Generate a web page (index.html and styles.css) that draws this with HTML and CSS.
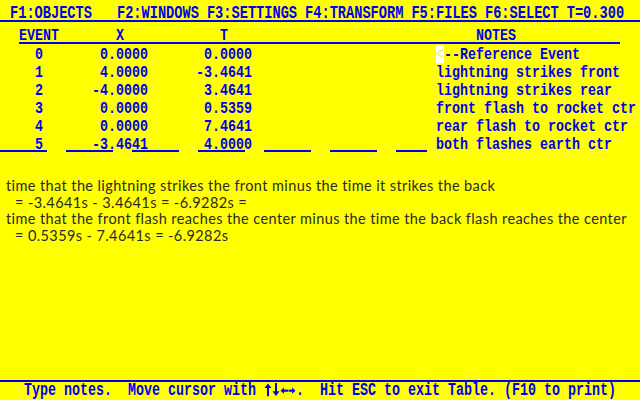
FILE: index.html
```html
<!DOCTYPE html>
<html>
<head>
<meta charset="utf-8">
<link rel="stylesheet" href="styles.css">
</head>
<body>
<div class="screen">
  <div class="menu">
    <span class="m1">F1:OBJECTS</span>
    <span class="m2">F2:WINDOWS</span>
    <span>F3:SETTINGS</span>
    <span>F4:TRANSFORM</span>
    <span>F5:FILES</span>
    <span>F6:SELECT</span>
    <span>T=0.300</span>
  </div>
  <div class="table">
    <div class="row head">
      <span class="ev">EVENT</span><span class="num hnum">X</span><span class="num hnum">T</span><span class="note hnote">NOTES</span>
    </div>
    <div class="body">
      <div class="row"><span class="ev c">0</span><span class="num">0.0000</span><span class="num">0.0000</span><span class="note"><span class="cur">&lt;</span>--Reference Event</span></div>
      <div class="row"><span class="ev c">1</span><span class="num">4.0000</span><span class="num">-3.4641</span><span class="note">lightning strikes front</span></div>
      <div class="row"><span class="ev c">2</span><span class="num">-4.0000</span><span class="num">3.4641</span><span class="note">lightning strikes rear</span></div>
      <div class="row"><span class="ev c">3</span><span class="num">0.0000</span><span class="num">0.5359</span><span class="note">front flash to rocket ctr</span></div>
      <div class="row"><span class="ev c">4</span><span class="num">0.0000</span><span class="num">7.4641</span><span class="note">rear flash to rocket ctr</span></div>
      <div class="row last"><span class="ev c">5</span><span class="num">-3.4641</span><span class="num">4.0000</span><span class="note">both flashes earth ctr</span>
        <div class="fields"><i></i><i></i><i></i><i></i><i></i><i></i><i class="short"></i></div>
      </div>
    </div>
  </div>
  <div class="text">
    <p>time that the lightning strikes the front minus the time it strikes the back</p>
    <p class="ind">= -3.4641s - 3.4641s = -6.9282s =</p>
    <p>time that the front flash reaches the center minus the time the back flash reaches the center</p>
    <p class="ind">= 0.5359s - 7.4641s = -6.9282s</p>
  </div>
  <div class="status"><span class="st">Type notes.  Move cursor with <svg class="arr" viewBox="0 0 32 13" width="32" height="10" preserveAspectRatio="none"><polygon points="0.5,5 4,0.5 7.5,5"/><rect x="3" y="4" width="2" height="9"/><rect x="11" y="0" width="2" height="9"/><polygon points="8.5,8 12,12.5 15.5,8"/><polygon points="16.5,7.5 20,4.5 20,10.5"/><rect x="19" y="6.5" width="5" height="2"/><polygon points="31.5,7.5 28,4.5 28,10.5"/><rect x="24.5" y="6.5" width="4" height="2"/></svg>.  Hit ESC to exit Table. (F10 to print)</span></div>
</div>
</body>
</html>
```
FILE: styles.css
```css
html, body {
  margin: 0;
  padding: 0;
  background: #ffff00;
}
.screen {
  width: 640px;
  height: 400px;
  display: flex;
  flex-direction: column;
  background: #ffff00;
  color: #0000f0;
  font-family: "Liberation Mono", "DejaVu Sans Mono", monospace;
  font-weight: bold;
  font-size: 13.33px;
  overflow: hidden;
}
.menu {
  display: flex;
  align-items: flex-start;
  gap: 8px;
  height: 20px;
  padding-left: 10px;
  border-bottom: 2px solid #0000f0;
  font-size: 13.67px;
  white-space: pre;
}
.menu span {
  display: block;
  margin-top: 8px;
  line-height: 12px;
  transform: scaleY(1.3);
}
.menu .m2 {
  margin-left: 17px;
}
.row {
  display: grid;
  grid-template-columns: 40px 89px 104px 184px 1fr;
  align-items: center;
  margin-left: 19px;
  height: 18px;
  white-space: pre;
  position: relative;
}
.row > span {
  line-height: 12px;
  transform: scaleY(1.2);
}
.row.head {
  height: 20px;
  align-items: start;
  margin-right: 20px;
  border-bottom: 2px solid #0000f0;
}
.row.head > span {
  margin-top: 8px;
  transform: scaleY(1.3);
}
.ev.c {
  text-align: center;
}
.num {
  text-align: right;
}
.hnum {
  padding-right: 24px;
}
.note {
  grid-column: 5;
}
.hnote {
  padding-left: 40px;
}
.body {
  padding-top: 2px;
}
.cur {
  background: #ffffff;
  color: #f4f47a;
}
.fields {
  position: absolute;
  left: -19px;
  top: 14px;
  display: flex;
  gap: 19px;
}
.fields i {
  display: block;
  width: 47px;
  height: 2px;
  background: #0000f0;
}
.fields i.short {
  width: 31px;
}
.text {
  margin-top: 24px;
  padding-left: 6px;
  font-family: "Lato", "Open Sans", sans-serif;
  font-weight: normal;
  font-size: 14.5px;
  letter-spacing: 0.4px;
  line-height: 16.7px;
  color: #2a2a2a;
}
.text p {
  margin: 0;
  white-space: pre;
}
.text .ind {
  padding-left: 9px;
}
.status {
  margin-top: auto;
  height: 18px;
  display: flex;
  align-items: center;
  border-top: 2px solid #0000f0;
  padding-left: 24px;
  white-space: pre;
}
.st {
  display: block;
  line-height: 12px;
  transform: scaleY(1.35);
}
.arr {
  fill: #0000f0;
  vertical-align: -1px;
}
```
